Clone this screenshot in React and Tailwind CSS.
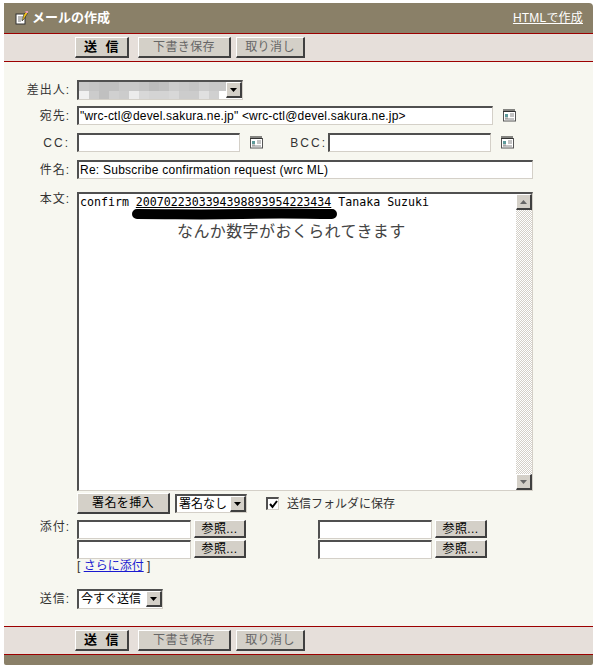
import React from 'react';

const rowA = ['#c8c8c8', '#c4c4c4', '#c0c0c0', '#c0c0c0', '#c8c8c8', '#c8c8c8', '#c4c4c4', '#bcbcbc', '#c0c0c0', '#cccccc', '#c8c8c8', '#c4c4c4', '#cccccc', '#c8c8c8', '#c8c8c8'];
const rowB = ['#f0f0f0', '#cccccc', '#c0c0c0', '#d0d0d0', '#cccccc', '#ececec', '#d8d8d8', '#d4d4d4', '#d4d4d4', '#d8d8d8', '#cccccc', '#cccccc', '#e0e0e0', '#d0d0d0', '#ffffff'];

const outset = 'border-t border-l border-t-white border-l-white border-r-2 border-b-2 border-r-[#404040] border-b-[#404040] bg-[#d4d0c8]';
const inset = 'border-t-2 border-l-2 border-t-[#505050] border-l-[#505050] border-r border-b border-r-[#d4d0c8] border-b-[#d4d0c8] bg-white';

const NoteIcon = () => (
  <svg width="14" height="14" viewBox="0 0 14 14" className="shrink-0">
    <rect x="1" y="3" width="9" height="10" fill="#fff" stroke="#333" />
    <path d="M3 6h5M3 8h4M3 10h3" stroke="#777" />
    <path d="M9 3l2-2 1.5 1.5L9 8 7 10z" fill="#f2c21a" stroke="#222" strokeWidth="0.6" />
    <rect x="10.5" y="0" width="2.5" height="2" fill="#e79ab0" />
  </svg>
);

const BookIcon = () => (
  <svg width="15" height="13" viewBox="0 0 15 13" className="shrink-0">
    <rect x="1.5" y="2.5" width="12" height="9.5" fill="#fff" stroke="#555" />
    <path d="M2 0v3M4 0v3M6 0v3M8 0v3M10 0v3M12 0v3" stroke="#111" />
    <rect x="3" y="5" width="3" height="3" fill="#5d9a9a" />
    <path d="M3 9h3M8 5h4M8 7h4M3 10h9" stroke="#888" />
  </svg>
);

const DownArrow = ({ color = '#000' }) => (
  <svg width="7" height="4" viewBox="0 0 7 4"><path d="M0 0h7L3.5 4z" fill={color} /></svg>
);

const Btn = ({ className = '', children }) => (
  <div className={`${outset} flex items-center justify-center whitespace-nowrap text-[12px] leading-[14px] tracking-[0.4px] ${className}`}>{children}</div>
);

const Toolbar = () => (
  <div className="flex h-[27px] items-center bg-[#e6dfda] pl-[71px]">
    <Btn className="h-[21px] w-[54px] text-[13px] font-bold text-black">送&nbsp;&nbsp;信</Btn>
    <Btn className="ml-[9px] h-[21px] w-[93px] text-[#666]">下書き保存</Btn>
    <Btn className="ml-[5px] h-[21px] w-[69px] text-[#666]">取り消し</Btn>
  </div>
);

const Label = ({ className = '', children }) => (
  <div className={`w-[73px] shrink-0 pr-[7px] text-right text-[12px] leading-[14px] tracking-[1px] text-[#333] ${className}`}>{children}</div>
);

const Field = ({ width, value = '', className = '' }) => (
  <input
    readOnly
    value={value}
    className={`${inset} block h-[19px] ${width} px-px text-[12px] leading-[14px] text-black outline-none ${className}`}
  />
);

const Arrow = () => (
  <div className={`${outset} flex h-[16px] w-[16px] shrink-0 items-center justify-center`}><DownArrow /></div>
);

const Attach = () => (
  <div className="flex h-[18px] w-[241px] items-center">
    <Field width="w-[114px]" />
    <Btn className="ml-[3px] h-[18px] w-[52px] text-black">参照...</Btn>
  </div>
);

function Attachments() {
  return (
    <div className="flex flex-col gap-[2px]">
      <div className="flex">
        <Attach />
        <Attach />
      </div>
      <div className="flex">
        <Attach />
        <Attach />
      </div>
    </div>
  );
}

export default function App() {
  return (
    <div className="h-[669px] w-[599px] bg-white pl-1 pt-[3px] font-['Liberation_Sans','Noto_Sans_CJK_JP',sans-serif]">
      <div className="w-[589px]">
        {/* Title bar */}
        <div className="box-content flex h-[30px] items-center justify-between rounded-tr-sm border-b border-b-[#9c0000] bg-[#8a8068] pl-[11px] pr-[10px]">
          <div className="flex items-center gap-[3px] text-[13px] font-bold text-white">
            <NoteIcon />
            メールの作成
          </div>
          <a className="text-[12px] tracking-[0.2px] text-white underline">HTMLで作成</a>
        </div>
        <Toolbar />
        <div className="h-px bg-[#9c0000]" />

        {/* Form */}
        <div className="h-[564px] bg-[#f7f7f0] pt-[18px]">
          <div className="flex h-[19px] items-center">
            <Label>差出人:</Label>
            <div className={`${inset} flex h-[20px] w-[166px] items-center`}>
              <div className="flex w-[147px] flex-col overflow-hidden">
                <div className="flex">
                  {rowA.map((c, i) => <div key={i} className="h-[9px] w-[10px] shrink-0" style={{ backgroundColor: c }} />)}
                </div>
                <div className="flex">
                  {rowB.map((c, i) => <div key={i} className="h-[8px] w-[10px] shrink-0" style={{ backgroundColor: c }} />)}
                </div>
              </div>
              <div className="ml-auto"><Arrow /></div>
            </div>
          </div>

          <div className="mt-[7px] flex h-[19px] items-center">
            <Label>宛先:</Label>
            <Field width="w-[416px]" className="tracking-[0.2px]" value={'"wrc-ctl@devel.sakura.ne.jp" <wrc-ctl@devel.sakura.ne.jp>'} />
            <div className="ml-[9px]"><BookIcon /></div>
          </div>

          <div className="mt-2 flex h-[19px] items-center">
            <Label className="tracking-[2px]">CC:</Label>
            <Field width="w-[163px]" />
            <div className="ml-[9px]"><BookIcon /></div>
            <div className="ml-[25px] w-[38px] text-right text-[12px] leading-[14px] tracking-[2px] text-[#333]">BCC:</div>
            <div className="ml-[1px]"><Field width="w-[163px]" /></div>
            <div className="ml-[9px]"><BookIcon /></div>
          </div>

          <div className="mt-2 flex h-[19px] items-center">
            <Label>件名:</Label>
            <Field width="w-[456px]" className="tracking-[0.25px]" value="Re: Subscribe confirmation request (wrc ML)" />
          </div>

          <div className="mt-[13px] flex items-start">
            <Label>本文:</Label>
            <div className={`${inset} relative flex h-[299px] w-[456px]`}>
              <div className="flex-1 pl-px pt-[1px]">
                <div className="font-['DejaVu_Sans_Mono',monospace] text-[11.6px] leading-[14px] text-black">
                  confirm <span className="underline">2007022303394398893954223434</span> Tanaka Suzuki
                </div>
                <div className="mt-[11px] pl-[97px] text-[16px] leading-[24px] tracking-[0.4px] text-[#444]">なんか数字がおくられてきます</div>
              </div>
              {/* blacked-out scribble */}
              <svg className="absolute left-[53px] top-[14px]" width="208" height="12" viewBox="0 0 208 12">
                <path d="M5 6 C50 6 60 7 110 6 S170 6 200 6" stroke="#000" strokeWidth="10" strokeLinecap="round" fill="none" />
              </svg>
              {/* scrollbar */}
              <div className="flex w-4 flex-col bg-[repeating-conic-gradient(#d4d0c8_0_25%,#fff_0_50%)] bg-size-[2px_2px]">
                <div className={`${outset} flex h-4 items-center justify-center`}>
                  <svg width="7" height="4" viewBox="0 0 7 4"><path d="M0 4h7L3.5 0z" fill="#666" /></svg>
                </div>
                <div className="mt-auto">
                  <div className={`${outset} flex h-4 items-center justify-center`}><DownArrow color="#666" /></div>
                </div>
              </div>
            </div>
          </div>

          <div className="mt-[2px] flex h-[21px] items-center pl-[73px]">
            <Btn className="h-[21px] w-[93px] text-black">署名を挿入</Btn>
            <div className={`${inset} ml-[5px] flex h-[19px] w-[72px] items-center justify-between whitespace-nowrap text-[12px] leading-[14px] text-black`}>
              <span className="pl-[2px]">署名なし</span>
              <Arrow />
            </div>
            <div className={`${inset} ml-[19px] flex h-[13px] w-[13px] items-center justify-center`}>
              <svg width="9" height="9" viewBox="0 0 9 9"><path d="M1 4l2.5 3L8 1" stroke="#000" strokeWidth="2" fill="none" /></svg>
            </div>
            <span className="ml-[8px] text-[12px] leading-[14px] text-[#333]">送信フォルダに保存</span>
          </div>

          <div className="mt-[6px] flex items-start">
            <Label>添付:</Label>
            <div className="flex-1">
              <Attachments />
              <div className="text-[12px] leading-[16px] text-[#333]">
                [&nbsp;<a className="text-[#1a1ad0] underline">さらに添付</a>&nbsp;]
              </div>
            </div>
          </div>

          <div className="mt-[15px] flex h-[19px] items-center">
            <Label>送信:</Label>
            <div className={`${inset} flex h-[20px] w-[86px] items-center justify-between whitespace-nowrap text-[12px] leading-[14px] text-black`}>
              <span className="pl-[2px]">今すぐ送信</span>
              <Arrow />
            </div>
          </div>
        </div>

        <div className="h-px bg-[#9c0000]" />
        <Toolbar />
        <div className="h-px bg-[#9c0000]" />
        <div className="h-[10px] rounded-b-[2px] bg-[#8a8068]" />
      </div>
    </div>
  );
}
